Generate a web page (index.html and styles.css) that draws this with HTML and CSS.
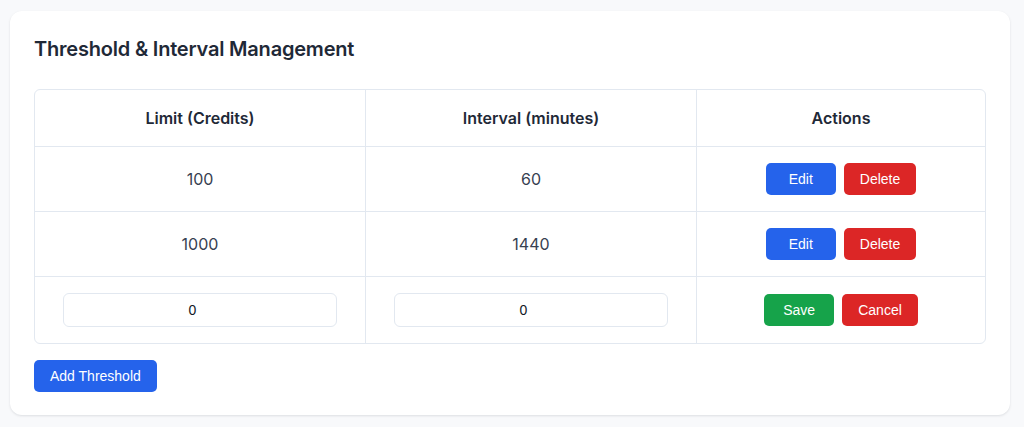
FILE: index.html
```html
<!DOCTYPE html>
<html lang="en">
<head>
<meta charset="utf-8">
<title>Threshold &amp; Interval Management</title>
<link rel="stylesheet" href="styles.css">
</head>
<body>
<div class="card">
  <h2 class="title">Threshold &amp; Interval Management</h2>
  <div class="table-wrap">
    <table class="grid">
      <colgroup>
        <col class="c1"><col class="c2"><col class="c3">
      </colgroup>
      <thead>
        <tr><th>Limit (Credits)</th><th>Interval (minutes)</th><th class="last">Actions</th></tr>
      </thead>
      <tbody>
        <tr>
          <td>100</td><td>60</td>
          <td class="last"><div class="actions"><button class="btn blue">Edit</button><button class="btn red">Delete</button></div></td>
        </tr>
        <tr>
          <td>1000</td><td>1440</td>
          <td class="last"><div class="actions"><button class="btn blue">Edit</button><button class="btn red">Delete</button></div></td>
        </tr>
        <tr class="edit-row">
          <td><input class="field" type="number" value="0"></td>
          <td><input class="field" type="number" value="0"></td>
          <td class="last"><div class="actions"><button class="btn green">Save</button><button class="btn red">Cancel</button></div></td>
        </tr>
      </tbody>
    </table>
  </div>
  <button class="btn blue add">Add Threshold</button>
</div>
</body>
</html>
```

FILE: styles.css
```css
html, body {
  margin: 0;
  padding: 0;
}
body {
  background: #f8f9fb;
  font-family: Inter, "Noto Sans", sans-serif;
  color: #1f2937;
}
.card {
  width: 1000px;
  box-sizing: border-box;
  margin: 11px 10px;
  background: #ffffff;
  border-radius: 12px;
  box-shadow: 0 1px 3px rgba(15, 23, 42, 0.08), 0 1px 2px rgba(15, 23, 42, 0.04);
  padding: 24px 24px 23px;
}
.title {
  margin: 0 0 26px;
  font-size: 20px;
  line-height: 28px;
  font-weight: 600;
  letter-spacing: -0.2px;
  color: #1f2937;
}
.table-wrap {
  border: 1px solid #e2e8f0;
  border-radius: 6px;
  overflow: hidden;
}
.grid {
  width: 100%;
  border-collapse: separate;
  border-spacing: 0;
  table-layout: fixed;
}
.c1, .c2 { width: 331px; }
.grid th, .grid td {
  text-align: center;
  padding: 16px;
  border-right: 1px solid #e2e8f0;
  border-bottom: 1px solid #e2e8f0;
  vertical-align: middle;
}
.grid th {
  font-size: 16px;
  line-height: 24px;
  font-weight: 600;
  color: #1f2937;
}
.grid td {
  font-size: 16px;
  line-height: 32px;
  color: #374151;
}
.grid .last { border-right: none; }
.grid tbody tr:last-child td { border-bottom: none; }
.actions {
  display: flex;
  justify-content: center;
  gap: 8px;
}
.btn {
  font-family: "Liberation Sans", Arial, sans-serif;
  font-size: 14px;
  height: 32px;
  min-width: 70px;
  padding: 0 16px;
  border: none;
  border-radius: 5px;
  color: #ffffff;
  cursor: pointer;
}
.blue { background: #2563eb; }
.red { background: #dc2626; }
.green { background: #16a34a; }
.field {
  display: block;
  margin: 0 auto;
  width: 274px;
  height: 34px;
  box-sizing: border-box;
  padding: 1px 2px;
  border: 1px solid #e2e8f0;
  border-radius: 6px;
  text-align: center;
  font-family: "Liberation Sans", Arial, sans-serif;
  font-size: 14px;
  color: #111827;
  background: #fff;
}
.add {
  margin-top: 16px;
  display: block;
}
```
